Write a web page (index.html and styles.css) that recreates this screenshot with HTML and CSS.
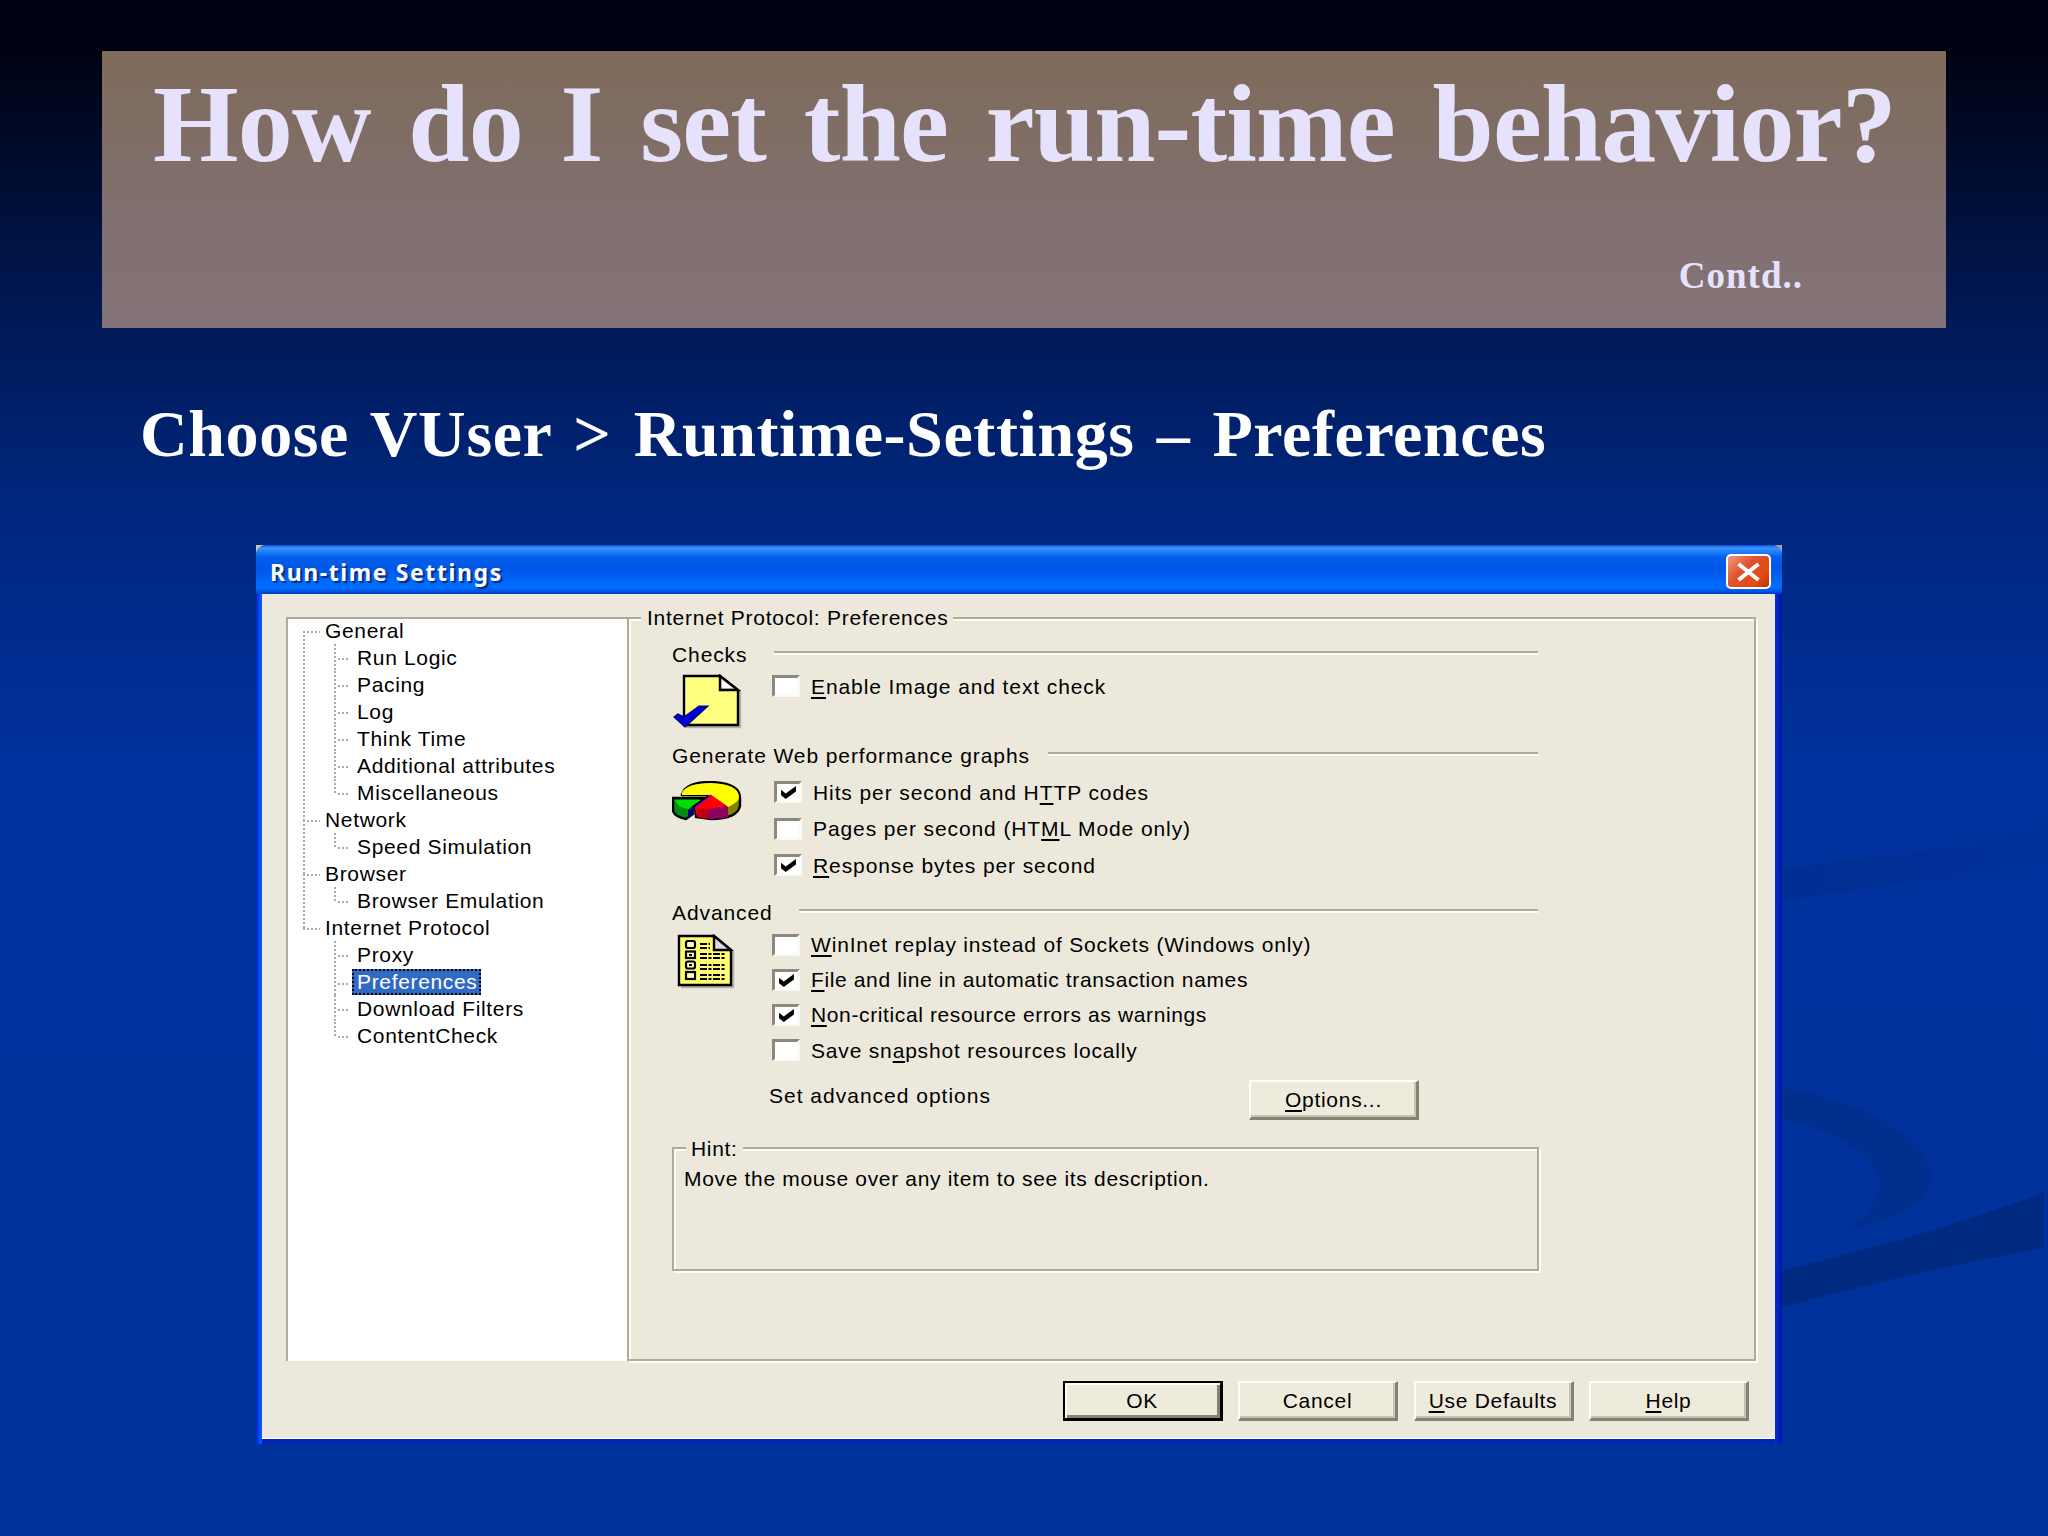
FILE: index.html
```html
<!DOCTYPE html>
<html lang="en">
<head>
<meta charset="utf-8">
<title>How do I set the run-time behavior?</title>
<link rel="stylesheet" href="styles.css">
</head>
<body>
<main class="slide">
  <svg class="swoosh" viewBox="0 0 2048 1536" aria-hidden="true">
    <defs>
      <linearGradient id="fade" x1="0" x2="1" y1="0" y2="0"><stop offset="0" stop-color="#002e90"/><stop offset="1" stop-color="#00319a"/></linearGradient>
    </defs>
    <path fill="url(#fade)" d="M1700 884 Q1800 864 1900 854 Q1980 846 2048 822 V865 Q1900 880 1700 915Z"/>
    <path fill="#002f8e" d="M1760 1084 Q1860 1098 1908 1138 Q1934 1160 1930 1184 Q1922 1214 1842 1232 Q1884 1206 1879 1178 Q1862 1132 1760 1114Z"/>
    <path fill="#002a80" d="M1760 1276 Q1950 1230 2044 1192 V1248 Q1900 1274 1760 1313Z"/>
  </svg>

  <header class="banner">
    <h1 class="banner-title">How do I set the run-time behavior?</h1>
    <p class="banner-note">Contd..</p>
  </header>
  <h2 class="subtitle">Choose VUser &gt; Runtime-Settings – Preferences</h2>

  <section class="dialog">
    <div class="titlebar">
      <span class="title">Run-time Settings</span>
      <span class="close"><svg viewBox="0 0 24 20"><path d="M2 2 L22 18 M22 2 L2 18" stroke="#fff" stroke-width="4"/></svg></span>
    </div>
    <div class="client">
      <div class="panes">
        <ul class="tree">
          <li><span class="node">General</span>
            <ul>
              <li><span class="node">Run Logic</span></li>
              <li><span class="node">Pacing</span></li>
              <li><span class="node">Log</span></li>
              <li><span class="node">Think Time</span></li>
              <li><span class="node">Additional attributes</span></li>
              <li><span class="node">Miscellaneous</span></li>
            </ul>
          </li>
          <li><span class="node">Network</span>
            <ul><li><span class="node">Speed Simulation</span></li></ul>
          </li>
          <li><span class="node">Browser</span>
            <ul><li><span class="node">Browser Emulation</span></li></ul>
          </li>
          <li><span class="node">Internet Protocol</span>
            <ul>
              <li><span class="node">Proxy</span></li>
              <li><span class="node selected">Preferences</span></li>
              <li><span class="node">Download Filters</span></li>
              <li><span class="node">ContentCheck</span></li>
            </ul>
          </li>
        </ul>

        <div class="pane">
          <span class="legend">Internet Protocol: Preferences</span>

          <section class="group checks">
            <div class="head"><span>Checks</span><i class="rule"></i></div>
            <div class="body">
              <svg class="icon" viewBox="0 0 76 56">
                <path d="M14 53 H68 V18" fill="none" stroke="#b5b3a6" stroke-width="2.400"/>
                <path d="M12 2 H48 L66 16 V51 H12Z" fill="#ffff80" stroke="#000" stroke-width="2.4"/>
                <path d="M48 2 L66 16 H48Z" fill="#d8d8d8" stroke="#000" stroke-width="2.4"/>
                <path d="M50 6 V14 H60Z" fill="#fff"/>
                <path d="M2 43 L6 40 L12 43 L27 32 H36 L13 53Z" fill="#0000d8" stroke="#00007a" stroke-width="1.2"/>
              </svg>
              <div class="options">
                <label class="opt"><i class="box"></i><span><u>E</u>nable Image and text check</span></label>
              </div>
            </div>
          </section>

          <section class="group graphs">
            <div class="head"><span>Generate Web performance graphs</span><i class="rule"></i></div>
            <div class="body">
              <svg class="icon" viewBox="0 0 76 56">
                <path d="M10 15 Q12 1 39 1 Q68 2 68 17 V25 Q65 38 39 38 L24 36 L23 26 L38 14 H10Z" fill="#868000" stroke="#000" stroke-width="2.4"/>
                <path d="M10 12 Q14 2 39 2 Q67 3 67 16 Q67 21 56 26 L39 14 H10Z" fill="#ff0"/>
                <path d="M39 14 L56 26 V36 Q40 40 25 36 L23 26Z" fill="#900060"/>
                <path d="M39 14 L55 25 L36 28 V37 L25 36 L23 26Z" fill="#f00"/>
                <path d="M25 27 L36 28 V37 L25 36Z" fill="#c00010"/>
                <path d="M24 26 L39 14" stroke="#a000c0" stroke-width="2"/>
                <path d="M1 17 H33 L21 25 V33 L14 38 Q3 36 1 30Z" fill="#008c10" stroke="#000" stroke-width="2.4"/>
                <path d="M3 19 H29 L16 28 Q5 26 3 19Z" fill="#00e000"/>
                <path d="M16 29 L22 25 V33 L16 37Z" fill="#000080"/>
              </svg>
              <div class="options">
                <label class="opt"><i class="box on"><svg viewBox="0 0 18 14"><path d="M1 4 L6 8 L17 0 V6 L6 14 L1 10Z"/></svg></i><span>Hits per second and H<u>T</u>TP codes</span></label>
                <label class="opt"><i class="box"></i><span>Pages per second (HT<u>M</u>L Mode only)</span></label>
                <label class="opt"><i class="box on"><svg viewBox="0 0 18 14"><path d="M1 4 L6 8 L17 0 V6 L6 14 L1 10Z"/></svg></i><span><u>R</u>esponse bytes per second</span></label>
              </div>
            </div>
          </section>

          <section class="group advanced">
            <div class="head"><span>Advanced</span><i class="rule"></i></div>
            <div class="body">
              <svg class="icon" viewBox="0 0 76 56">
                <path d="M9 53 H61 V18" fill="none" stroke="#b5b3a6" stroke-width="2.400"/>
                <path d="M7 2 H42 L59 16 V51 H7Z" fill="#ffff70" stroke="#000" stroke-width="2.4"/>
                <path d="M42 2 L59 16 H42Z" fill="#ddd" stroke="#000" stroke-width="2.4"/>
                <g fill="#ffffc0" stroke="#000" stroke-width="2.2"><rect x="14" y="7" width="9" height="7" rx="2"/><rect x="14" y="17.500" width="9" height="6.500"/><rect x="14" y="27.500" width="9" height="7" rx="2"/><rect x="14" y="38" width="9" height="7"/></g>
                <path d="M17 21 H20 M17 31 H20" stroke="#000" stroke-width="2"/>
                <path d="M28 10 H38 M28 14 H38 M28 20 H53 M28 24 H53 M28 31 H53 M28 35 H53 M28 41 H53 M28 45 H53" stroke="#000" stroke-width="1.800" stroke-dasharray="7 1.500 3 1.500"/>
              </svg>
              <div class="options">
                <label class="opt"><i class="box"></i><span><u>W</u>inInet replay instead of Sockets (Windows only)</span></label>
                <label class="opt narrow"><i class="box on"><svg viewBox="0 0 18 14"><path d="M1 4 L6 8 L17 0 V6 L6 14 L1 10Z"/></svg></i><span><u>F</u>ile and line in automatic transaction names</span></label>
                <label class="opt narrow"><i class="box on"><svg viewBox="0 0 18 14"><path d="M1 4 L6 8 L17 0 V6 L6 14 L1 10Z"/></svg></i><span><u>N</u>on-critical resource errors as warnings</span></label>
                <label class="opt"><i class="box"></i><span>Save sn<u>a</u>pshot resources locally</span></label>
              </div>
            </div>
          </section>

          <div class="more">
            <span>Set advanced options</span>
            <button class="btn"><span><u>O</u>ptions...</span></button>
          </div>

          <div class="hint">
            <span class="hint-legend">Hint:</span>
            <p>Move the mouse over any item to see its description.</p>
          </div>
        </div>
      </div>

      <footer class="actions">
        <button class="btn default"><span>OK</span></button>
        <button class="btn"><span>Cancel</span></button>
        <button class="btn"><span><u>U</u>se Defaults</span></button>
        <button class="btn"><span><u>H</u>elp</span></button>
      </footer>
    </div>
  </section>
</main>
</body>
</html>
```
FILE: styles.css
```css
* { box-sizing: border-box; }
body { margin: 0; }

.slide {
  position: relative;
  isolation: isolate;
  display: flex;
  flex-direction: column;
  width: 2048px;
  height: 1536px;
  padding: 51px 102px 0;
  overflow: hidden;
  background: linear-gradient(#000010 0, #000212 50px, #001a58 330px, #00267c 500px, #002a88 590px, #00319c 760px, #00329c 100%);
}
.swoosh { position: absolute; inset: 0; width: 100%; height: 100%; }

.banner {
  position: relative;
  height: 277px;
  background: linear-gradient(#7f6b5b, #80706f 60%, #837377);
  color: #e6e2fc;
  font-family: "Liberation Serif", serif;
  font-weight: bold;
}
.banner-title {
  margin: 0;
  padding: 10px 0 0 51px;
  font-size: 110px;
  line-height: 126px;
  letter-spacing: -.8px;
  word-spacing: 11px;
  white-space: nowrap;
}
.banner-note {
  margin: 68px 143px 0 0;
  font-size: 37px;
  line-height: 42px;
  letter-spacing: 1px;
  text-align: right;
}
.subtitle {
  position: relative;
  margin: 68px 0 0 38px;
  color: #fff;
  font: bold 66px/76px "Liberation Serif", serif;
  letter-spacing: .6px;
  word-spacing: 5px;
  white-space: nowrap;
}

/* dialog window */
.dialog {
  position: relative;
  width: 1526px;
  height: 899px;
  margin: 73px 0 0 154px;
  padding: 0 7px 5px 6px;
  background: linear-gradient(90deg, #0026d0, #0a5af0 5px, #0a5af0 6px, transparent 6px, transparent 1519px, #0030d8 1519px, #0012a0 1526px), #0024b4;
  border-radius: 10px 10px 0 0;
  color: #000;
  font: 21px/27px "Liberation Sans", Arial, sans-serif;
  letter-spacing: .6px;
  white-space: nowrap;
}
.dialog::before {
  content: "";
  position: absolute;
  z-index: -1;
  inset: 0 0 auto;
  height: 8px;
  background: linear-gradient(90deg, #c9c3ae 8px, transparent 8px 1518px, #a9a6a4 1518px);
}
.titlebar {
  display: flex;
  align-items: center;
  justify-content: space-between;
  height: 49px;
  margin: 0 -7px 0 -6px;
  padding: 4px 11px 0 14px;
  border-radius: 10px 10px 0 0;
  background: linear-gradient(#0a50d8 0, #3d95ff 3px, #2484fb 6px, #0560ee 12px, #0057e4 22px, #005cf0 30px, #006cff 38px, #006cff 43px, #0050dc 47px, #0038b8 49px);
}
.title {
  color: #fff;
  font: bold 23px/28px "Noto Sans", sans-serif;
  letter-spacing: 1.6px;
  text-shadow: 2px 2px 1px #0a2a80;
}
.close {
  display: grid;
  place-items: center;
  width: 45px;
  height: 35px;
  border: 2px solid #fff;
  border-radius: 5px;
  background: linear-gradient(135deg, #ee9a80, #e0512c 40%, #e64a12 75%, #b83408);
}
.close svg { width: 25px; height: 20px; }

.client {
  height: 845px;
  padding: 23px 19px 0 24px;
  background: #ece9dc;
  border-bottom: 1px solid #fff;
}
.panes { display: flex; height: 744px; }

/* settings tree */
.tree {
  width: 341px;
  padding: 0;
  margin: 0;
  background: #fff;
  box-shadow: inset 2px 2px #aeaa9c;
  letter-spacing: .66px;
}
.tree, .tree ul { list-style: none; }
.tree li { position: relative; padding-left: 39px; }
.tree ul { margin: 0; padding: 0; }
.tree ul li { padding-left: 32px; }
.tree li::before {
  content: "";
  position: absolute;
  left: 17px;
  top: 14px;
  height: 100%;
  width: 2px;
  background: repeating-linear-gradient(#aaa 0 2px, transparent 2px 4px);
}
.tree > li:last-child::before { height: 2px; }
.tree li::after {
  content: "";
  position: absolute;
  left: 21px;
  top: 14px;
  width: 13px;
  height: 2px;
  background: repeating-linear-gradient(90deg, #aaa 0 2px, transparent 2px 4px);
}
.tree ul li::before { left: 9px; top: 0; }
.tree ul li:last-child::before { height: 15px; }
.tree ul li::after { left: 13px; width: 12px; }
.node { display: block; width: max-content; height: 27px; }
.selected {
  height: 26px;
  margin: 1px 0 0 -5px;
  padding: 0 2px 0 3px;
  border: 2px dotted #000;
  background: #316ac5;
  color: #fff;
  line-height: 21px;
}

/* right-hand pane */
.pane {
  position: relative;
  flex: 1;
  padding: 24px 0 0 43px;
  border: 2px solid #aeaa9c;
  box-shadow: inset 2px 2px #fffef4, 2px 2px #fffef4;
  letter-spacing: .9px;
}
.legend {
  position: absolute;
  left: 12px;
  top: -15px;
  padding: 0 5px 0 6px;
  background: #ece9dc;
  letter-spacing: .75px;
}
.group { width: 866px; }
.checks { height: 101px; margin-top: -2px; }
.graphs { height: 157px; }
.advanced { height: 166px; }
.head { display: flex; height: 27px; }
.rule {
  flex: 1;
  height: 4px;
  margin: 10px 0 0 23px;
  border-top: 2px solid #aeaa9c;
  border-bottom: 2px solid #fffef4;
}
.checks .rule { margin-left: 27px; }
.graphs .rule { margin-left: 18px; }
.advanced .rule { margin-left: 26px; }
.body { display: flex; }
.icon { flex: none; width: 76px; height: 56px; }
.checks .icon { margin-top: 6px; }
.graphs .icon { margin-top: 12px; }
.advanced .icon { margin-top: 8px; }
.options { margin-left: 24px; }
.opt { display: flex; align-items: center; gap: 11px; }
.checks .opt { height: 36px; }
.graphs .options { margin: 5px 0 0 26px; }
.graphs .opt { height: 36.500px; }
.advanced .opt { height: 35.200px; letter-spacing: .82px; }
.advanced .narrow { letter-spacing: .62px; }
.advanced .options { margin-top: 1px; }
.box {
  display: grid;
  place-items: center;
  width: 28px;
  height: 22px;
  background: #fff;
  border: solid;
  border-width: 3px 3px 2px 3px;
  border-color: #8b897b #fbfaf2 #fbfaf2 #8b897b;
}
.box svg { width: 17px; height: 13px; }
u { text-decoration-thickness: 2px; text-underline-offset: 3px; text-decoration-skip-ink: none; }

.more {
  display: flex;
  align-items: flex-start;
  justify-content: space-between;
  width: 747px;
  margin-top: 15px;
  padding-left: 97px;
}
.btn {
  height: 40px;
  padding: 0;
  border: solid;
  border-width: 2px 3px 3px 2px;
  border-color: #fffef4 #858273 #858273 #fffef4;
  background: #eeebdd;
  box-shadow: inset -2px -2px #c8c4b2;
  color: #000;
  font: inherit;
  letter-spacing: .7px;
}
.more .btn { width: 170px; }
.more > span { margin-top: 2px; letter-spacing: 1px; }

.hint {
  position: relative;
  width: 867px;
  height: 124px;
  margin-top: 27px;
  padding: 16px 0 0 10px;
  border: 2px solid #aeaa9c;
  box-shadow: inset 2px 2px #fffef4, 2px 2px #fffef4;
  letter-spacing: .68px;
}
.hint-legend {
  position: absolute;
  left: 12px;
  top: -14px;
  padding: 0 5px;
  background: #ece9dc;
}
.hint p { margin: 0; }

.actions {
  display: flex;
  justify-content: flex-end;
  gap: 15.500px;
  padding: 20px 7px 0 0;
}
.actions .btn { width: 160px; }
.btn.default {
  border: 2px solid #000;
  border-width: 2px 3px 3px 2px;
  box-shadow: inset 2px 2px #fffef4, inset -3px -3px #858273;
}
```
